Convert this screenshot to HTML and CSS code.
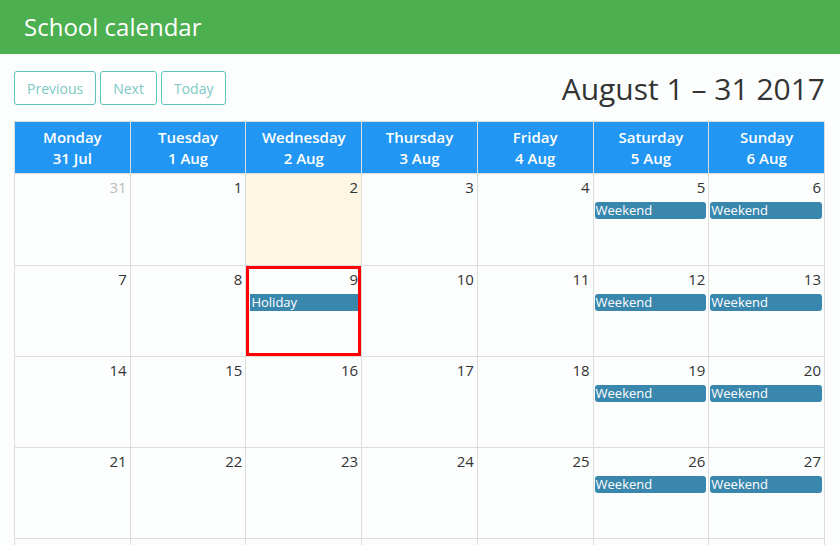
FILE: index.html
```html
<!DOCTYPE html>
<html lang="en">
<head>
  <meta charset="UTF-8">
  <meta name="viewport" content="width=device-width, initial-scale=1.0">
  <title>School calendar</title>
  <link rel="stylesheet" href="styles.css">
</head>
<body>

  <div class="appBar">School calendar</div>

  <div class="toolbar">
    <div class="navButtons">
      <button class="navBtn">Previous</button>
      <button class="navBtn">Next</button>
      <button class="navBtn">Today</button>
    </div>
    <h2 class="rangeTitle">August 1 &ndash; 31 2017</h2>
  </div>

  <div class="calendar">
    <div class="dayHead">Monday<br>31 Jul</div>
    <div class="dayHead">Tuesday<br>1 Aug</div>
    <div class="dayHead">Wednesday<br>2 Aug</div>
    <div class="dayHead">Thursday<br>3 Aug</div>
    <div class="dayHead">Friday<br>4 Aug</div>
    <div class="dayHead">Saturday<br>5 Aug</div>
    <div class="dayHead">Sunday<br>6 Aug</div>

    <!-- week 1 -->
    <div class="dayCell otherMonth"><div class="dayNum">31</div></div>
    <div class="dayCell"><div class="dayNum">1</div></div>
    <div class="dayCell today"><div class="dayNum">2</div></div>
    <div class="dayCell"><div class="dayNum">3</div></div>
    <div class="dayCell"><div class="dayNum">4</div></div>
    <div class="dayCell"><div class="dayNum">5</div><div class="event">Weekend</div></div>
    <div class="dayCell"><div class="dayNum">6</div><div class="event">Weekend</div></div>

    <!-- week 2 -->
    <div class="dayCell"><div class="dayNum">7</div></div>
    <div class="dayCell"><div class="dayNum">8</div></div>
    <div class="dayCell selected"><div class="dayNum">9</div><div class="event holiday">Holiday</div></div>
    <div class="dayCell"><div class="dayNum">10</div></div>
    <div class="dayCell"><div class="dayNum">11</div></div>
    <div class="dayCell"><div class="dayNum">12</div><div class="event">Weekend</div></div>
    <div class="dayCell"><div class="dayNum">13</div><div class="event">Weekend</div></div>

    <!-- week 3 -->
    <div class="dayCell"><div class="dayNum">14</div></div>
    <div class="dayCell"><div class="dayNum">15</div></div>
    <div class="dayCell"><div class="dayNum">16</div></div>
    <div class="dayCell"><div class="dayNum">17</div></div>
    <div class="dayCell"><div class="dayNum">18</div></div>
    <div class="dayCell"><div class="dayNum">19</div><div class="event">Weekend</div></div>
    <div class="dayCell"><div class="dayNum">20</div><div class="event">Weekend</div></div>

    <!-- week 4 -->
    <div class="dayCell"><div class="dayNum">21</div></div>
    <div class="dayCell"><div class="dayNum">22</div></div>
    <div class="dayCell"><div class="dayNum">23</div></div>
    <div class="dayCell"><div class="dayNum">24</div></div>
    <div class="dayCell"><div class="dayNum">25</div></div>
    <div class="dayCell"><div class="dayNum">26</div><div class="event">Weekend</div></div>
    <div class="dayCell"><div class="dayNum">27</div><div class="event">Weekend</div></div>

    <!-- week 5, below the fold -->
    <div class="dayCell"></div>
    <div class="dayCell"></div>
    <div class="dayCell"></div>
    <div class="dayCell"></div>
    <div class="dayCell"></div>
    <div class="dayCell"></div>
    <div class="dayCell"></div>
  </div>

</body>
</html>
```

FILE: styles.css
```css
body {
  font-family: "Open Sans", sans-serif;
  margin: 0;
  background-color: #fcfefe;
  color: #333;
  overflow: hidden;
}
.appBar {
  height: 54px;
  line-height: 54px;
  padding-left: 24px;
  background-color: #4caf50;
  color: #fff;
  font-size: 24px;
}
.toolbar {
  display: flex;
  justify-content: space-between;
  align-items: center;
  margin: 17px 15px 16px 14px;
  height: 34px;
}
.navButtons {
  display: flex;
  gap: 4px;
}
.navBtn {
  height: 34px;
  padding: 0 12px;
  font-family: "Open Sans", sans-serif;
  font-size: 14px;
  color: #7ccac3;
  background-color: #fff;
  border: 1px solid #5cc4bb;
  border-radius: 3px;
}
.rangeTitle {
  margin: 0;
  font-size: 30px;
  font-weight: 400;
  color: #333;
}
.calendar {
  display: grid;
  grid-template-columns: repeat(7, 1fr);
  grid-template-rows: 52px 92px;
  grid-auto-rows: 91px;
  margin: 0 15px 0 14px;
  border-left: 1px solid #ddd;
  border-top: 1px solid #ddd;
}
.dayHead {
  padding-top: 5px;
  box-sizing: border-box;
  background-color: #2196f3;
  color: #fff;
  font-size: 15px;
  font-weight: 600;
  line-height: 21px;
  text-align: center;
  border-right: 1px solid #ddd;
  border-bottom: 1px solid #ddd;
}
.dayCell {
  border-right: 1px solid #ddd;
  border-bottom: 1px solid #ddd;
  min-width: 0;
}
.dayNum {
  height: 26px;
  padding: 2px 3px 0 0;
  box-sizing: border-box;
  text-align: right;
  font-size: 15px;
  line-height: 22px;
}
.otherMonth .dayNum {
  color: #bbb;
}
.today {
  background-color: #fdf6e3;
}
.selected {
  box-shadow: inset 0 0 0 3px #f00;
  padding: 0 3px;
}
.selected .dayNum {
  padding-right: 0;
}
.event {
  margin: 2px 2px 0 1px;
  height: 17px;
  line-height: 17px;
  padding-left: 1px;
  font-size: 13px;
  color: #fff;
  background-color: #3a87ad;
  border-radius: 3px;
}
.holiday {
  margin: 2px 0 0 1px;
  border-radius: 0;
}
```
